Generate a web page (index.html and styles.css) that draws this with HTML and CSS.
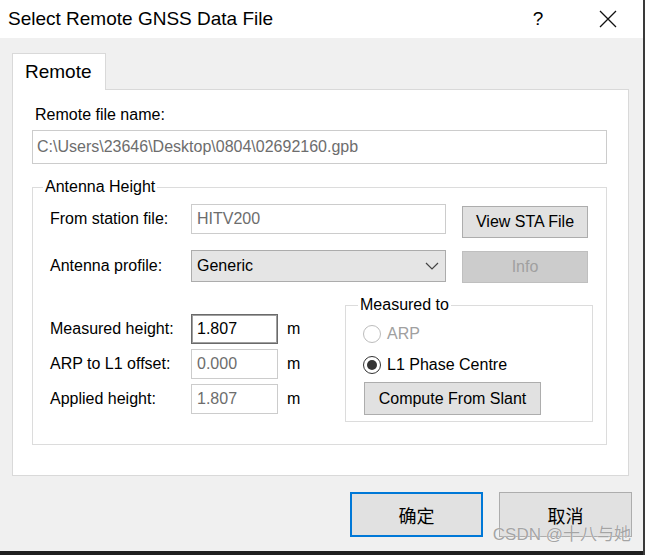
FILE: index.html
```html
<!DOCTYPE html>
<html>
<head>
<meta charset="utf-8">
<link rel="stylesheet" href="styles.css">
</head>
<body>
<div class="window">
  <div class="titlebar">
    <span class="title">Select Remote GNSS Data File</span>
    <span class="tbtn help">?</span>
    <span class="tbtn close">
      <svg width="18" height="18" viewBox="0 0 18 18"><path d="M1 1 L17 17 M17 1 L1 17" stroke="#111" stroke-width="1.3" fill="none"/></svg>
    </span>
  </div>
  <div class="main">
    <div class="tab">Remote</div>
    <div class="panel">
      <div class="toplabel">Remote file name:</div>
      <div class="field file">C:\Users\23646\Desktop\0804\02692160.gpb</div>
      <fieldset class="group antenna">
        <legend>Antenna Height</legend>
        <div class="topgrid">
          <div class="lbl lbl30">From station file:</div>
          <div class="field station">HITV200</div>
          <div class="btn sta">View STA File</div>
          <div class="lbl lbl32">Antenna profile:</div>
          <div class="combo"><span>Generic</span>
            <svg width="14" height="8" viewBox="0 0 14 8"><path d="M1 1 L7 7 L13 1" stroke="#444" stroke-width="1.2" fill="none"/></svg>
          </div>
          <div class="btn info">Info</div>
        </div>
        <div class="lower">
          <div class="heights">
            <div class="hrow"><span class="hlbl">Measured height:</span><span class="num active">1.807</span><span class="unit">m</span></div>
            <div class="hrow"><span class="hlbl">ARP to L1 offset:</span><span class="num">0.000</span><span class="unit">m</span></div>
            <div class="hrow"><span class="hlbl">Applied height:</span><span class="num">1.807</span><span class="unit">m</span></div>
          </div>
          <fieldset class="group measured">
            <legend>Measured to</legend>
            <div class="radio off"><span class="circle"></span><span>ARP</span></div>
            <div class="radio on"><span class="circle"><span class="dot"></span></span><span>L1 Phase Centre</span></div>
            <div class="btn slant">Compute From Slant</div>
          </fieldset>
        </div>
      </fieldset>
    </div>
    <div class="footer">
      <div class="btn big default">确定</div>
      <div class="btn big">取消</div>
      <span class="watermark">CSDN @十八与她</span>
    </div>
  </div>
  <div class="taskbar"></div>
</div>
</body>
</html>
```

FILE: styles.css
```css
* { box-sizing: border-box; }
html, body { margin: 0; padding: 0; }
body {
  width: 645px;
  height: 555px;
  overflow: hidden;
  background: #f0f0f0;
  font-family: "Liberation Sans", Arial, "Noto Sans CJK SC", sans-serif;
  font-size: 16px;
  color: #000;
}
.window {
  width: 645px;
  height: 555px;
  border-right: 2px solid #3a3a3a;
  display: flex;
  flex-direction: column;
}
.titlebar {
  height: 38px;
  flex: none;
  background: #fff;
  display: flex;
  align-items: center;
}
.title {
  flex: 1;
  padding-left: 8px;
  font-size: 19px;
}
.tbtn {
  width: 70px;
  height: 38px;
  display: flex;
  align-items: center;
  justify-content: center;
}
.help { font-size: 19px; }
.main {
  flex: 1;
  padding: 15px 0 0 12px;
}
.tab {
  width: 94px;
  height: 37px;
  background: #fff;
  border: 1px solid #d9d9d9;
  border-bottom: none;
  margin-bottom: -1px;
  position: relative;
  z-index: 1;
  font-size: 19px;
  line-height: 35px;
  padding-left: 12px;
}
.panel {
  width: 617px;
  height: 387px;
  background: #fff;
  border: 1px solid #d9d9d9;
  padding: 15px 21px 0 19px;
}
.toplabel {
  line-height: 20px;
  padding-left: 3px;
}
.field {
  border: 1px solid #cccccc;
  color: #6d6d6d;
  white-space: nowrap;
}
.file {
  height: 34px;
  margin-top: 5px;
  line-height: 32px;
  padding-left: 4px;
}
fieldset.group {
  margin: 0;
  border: 1px solid #dcdcdc;
  min-width: 0;
}
fieldset.group legend {
  padding: 0 2px;
  line-height: 20px;
}
fieldset.antenna {
  margin-top: 13px;
  padding: 7px 18px 22px 17px;
}
fieldset.antenna > legend { margin-left: -7px; }
.topgrid {
  display: grid;
  grid-template-columns: 125px 255px 126px;
  column-gap: 16px;
  row-gap: 12px;
  align-items: start;
}
.lbl30 { line-height: 30px; }
.lbl32 { line-height: 32px; }
.station {
  height: 30px;
  line-height: 28px;
  padding-left: 5px;
}
.btn {
  background: #e1e1e1;
  border: 1px solid #adadad;
  display: flex;
  align-items: center;
  justify-content: center;
}
.sta { height: 32px; margin-top: 2px; }
.info {
  height: 32px;
  margin-top: 1px;
  background: #cccccc;
  border-color: #bfbfbf;
  color: #a0a0a0;
}
.combo {
  height: 32px;
  background: #e5e5e5;
  border: 1px solid #acacac;
  display: flex;
  align-items: center;
  justify-content: space-between;
  padding: 0 6px 0 5px;
}
.lower {
  display: flex;
  align-items: flex-start;
  margin-top: 12px;
}
.heights {
  flex: none;
  width: 295px;
  margin-top: 19px;
  display: flex;
  flex-direction: column;
  gap: 5px;
}
.hrow {
  display: flex;
  align-items: center;
  height: 30px;
}
.hlbl { width: 141px; }
.num {
  width: 87px;
  height: 30px;
  border: 1px solid #cccccc;
  color: #6d6d6d;
  padding-left: 5px;
  line-height: 28px;
}
.num.active {
  border: 1px solid #6a6a6a;
  box-shadow: inset 0 0 0 1px #a0a0a0;
  color: #000;
}
.unit { margin-left: 9px; }
fieldset.measured {
  flex: none;
  width: 248px;
  padding: 5px 10px 6px 17px;
}
fieldset.measured > legend { margin-left: -5px; }
.radio {
  height: 28px;
  display: flex;
  align-items: center;
  gap: 6px;
  margin-bottom: 3px;
}
.circle {
  width: 18px;
  height: 18px;
  border-radius: 50%;
  background: #fff;
  display: flex;
  align-items: center;
  justify-content: center;
}
.off { color: #a0a0a0; }
.off .circle { border: 1px solid #bcbcbc; }
.on .circle { border: 1.5px solid #333; }
.dot {
  width: 10px;
  height: 10px;
  border-radius: 50%;
  background: #333;
}
.slant {
  width: 177px;
  height: 33px;
  margin-top: 3px;
  margin-left: 1px;
}
.footer {
  margin-top: 16px;
  margin-right: 11px;
  display: flex;
  justify-content: flex-end;
  gap: 16px;
  position: relative;
}
.big {
  width: 133px;
  height: 45px;
  font-family: "Noto Sans CJK SC", sans-serif;
  font-size: 18px;
}
.default { border: 2px solid #0078d7; }
.watermark {
  position: absolute;
  right: 1px;
  top: 33px;
  font-size: 17px;
  line-height: 20px;
  color: #a4a4a4;
  text-shadow: 0 0 1px #fff;
  font-family: "Liberation Sans", "Noto Sans CJK SC", sans-serif;
}
.taskbar {
  height: 4px;
  flex: none;
  background: #1e1e1e;
}
```
